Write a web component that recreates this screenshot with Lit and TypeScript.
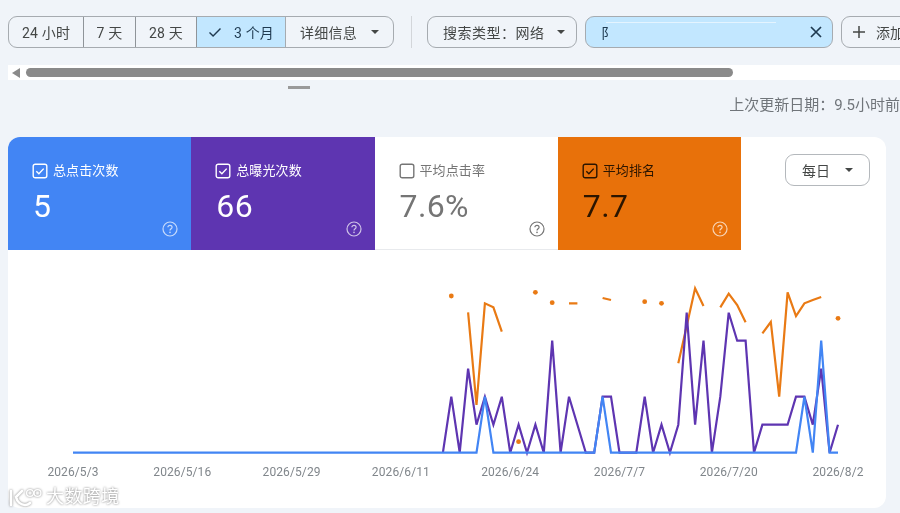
import { LitElement, css, html, svg } from 'lit'
import { customElement } from 'lit/decorators.js'

const xAt = (i: number) => 73 + 8.407 * i
const clickY = (v: number) => 452.7 - 28 * v

// per-day values, the first 44 days are all zero
const zeros = (n: number) => Array<number>(n).fill(0)
const impressions = [
  ...zeros(44),
  0, 2, 0, 3, 1, 2, 1, 2, 0, 1, 0, 1, 0, 4, 0, 2, 1, 0, 0, 2, 2, 0, 0, 0, 2, 0,
  1, 0, 1, 5, 1, 4, 0, 2, 5, 4, 4, 0, 1, 1, 1, 1, 2, 2, 1, 3, 0, 1,
]
const clicks = impressions.map(() => 0)
clicks[49] = 2
clicks[63] = 2
clicks[87] = 2
clicks[89] = 4

// average position, already as y in chart space
const position: Record<number, number> = {
  45: 296, 47: 312.3, 48: 405, 49: 303.3, 50: 307.3, 51: 331.7, 53: 441.7, 55: 292.3, 57: 302.7,
  59: 303.3, 60: 303.3, 63: 298, 64: 300, 68: 301.7, 70: 303.3, 72: 363.3, 73: 326, 74: 288.3, 75: 306,
  77: 307.3, 78: 293.7, 79: 305, 80: 322.3, 82: 333.3, 83: 322, 84: 396.7, 85: 292.3, 86: 316,
  87: 303.3, 88: 300, 89: 297, 91: 318.3,
}

const dateLabels = ['2026/5/3', '2026/5/16', '2026/5/29', '2026/6/11', '2026/6/24', '2026/7/7', '2026/7/20', '2026/8/2']

const positionRuns = () => {
  const runs: number[][] = []
  let run: number[] = []
  for (let i = 0; i < 92; i++) {
    if (position[i] !== undefined) {
      run.push(i)
    } else if (run.length) {
      runs.push(run)
      run = []
    }
  }
  if (run.length) runs.push(run)
  return runs
}

const checkIcon = (checked: boolean) => html`
  <svg class="check" viewBox="0 0 16 16" width="16" height="16">
    <rect x="1.2" y="1.2" width="13.6" height="13.6" rx="2" fill="none" stroke="currentColor" stroke-width="1.4"></rect>
    ${checked ? svg`<path d="M4.3 8.2l2.6 2.6 4.8-5.2" fill="none" stroke="currentColor" stroke-width="1.4"></path>` : ''}
  </svg>
`

const helpIcon = html`
  <svg class="help" viewBox="0 0 16 16" width="16" height="16">
    <circle cx="8" cy="8" r="7" fill="none" stroke="currentColor" stroke-width="1.2"></circle>
    <path d="M5.9 6.3c0-1.2.9-2 2.1-2s2.1.8 2.1 1.9c0 1.5-2.1 1.6-2.1 3.3" fill="none" stroke="currentColor" stroke-width="1.2"></path>
    <circle cx="8" cy="11.4" r=".8" fill="currentColor"></circle>
  </svg>
`

const caret = html`<span class="caret"></span>`

@customElement('app-root')
export class AppRoot extends LitElement {
  static styles = css`
    :host {
      display: block;
      width: 900px;
      height: 513px;
      overflow: hidden;
      position: relative;
      background: #f0f4f9;
      color: #444746;
      font-family: Roboto, 'Noto Sans CJK SC', sans-serif;
      font-size: 14px;
      filter: blur(0.35px);
    }
    .toolbar {
      display: flex;
      align-items: center;
      width: max-content;
      height: 32px;
      padding: 16px 0 0 8px;
    }
    .group {
      display: flex;
      height: 32px;
      border: 1px solid #a6abb0;
      border-radius: 9px;
      overflow: hidden;
      box-sizing: border-box;
      width: 386px;
    }
    .seg {
      display: flex;
      flex: none;
      align-items: center;
      justify-content: center;
      gap: 12px;
      box-sizing: border-box;
      border-left: 1px solid #8f9499;
      letter-spacing: 0.2px;
    }
    .seg:first-child {
      border-left: none;
    }
    .seg.on {
      background: #c2e7ff;
      color: #1f3a50;
    }
    .seg.more {
      border-left: 1px solid #a6abb0;
      gap: 14px;
    }
    .divider {
      width: 1px;
      height: 32px;
      background: #d3d6da;
      margin: 0 15px 0 17px;
    }
    .chip {
      display: flex;
      align-items: center;
      box-sizing: border-box;
      height: 32px;
      border: 1px solid #a6abb0;
      border-radius: 9px;
      flex: none;
    }
    .chip.type {
      width: 150px;
      padding-left: 15px;
      gap: 12px;
      letter-spacing: 0.5px;
    }
    .chip.filter {
      position: relative;
      width: 248px;
      margin-left: 8px;
      padding: 0 9px 0 15px;
      justify-content: space-between;
      background: #c2e7ff;
      color: #1f3a50;
    }
    .chip.filter .glare {
      position: absolute;
      left: 20px;
      top: 5px;
      width: 170px;
      height: 1px;
      background: #e4f4ff;
    }
    .chip.add {
      width: 150px;
      margin-left: 8px;
      padding-left: 10px;
      gap: 10px;
    }
    .caret {
      width: 0;
      height: 0;
      border: 4px solid transparent;
      border-top: 4px solid #444746;
      border-bottom: none;
    }
    .track {
      display: flex;
      align-items: center;
      gap: 6px;
      height: 15px;
      margin: 17px 0 0 8px;
      padding-left: 4px;
      background: #fff;
    }
    .arrow {
      width: 0;
      height: 0;
      border: 5px solid transparent;
      border-right: 8px solid #8a8a8a;
      border-left: none;
    }
    .thumb {
      width: 707px;
      height: 9px;
      border-radius: 5px;
      background: #8a8a8a;
    }
    .handle {
      width: 22px;
      height: 3px;
      margin: 6px 0 0 288px;
      background: #9a9a9a;
    }
    .updated {
      text-align: right;
      margin-top: 6px;
      height: 20px;
      line-height: 20px;
      font-size: 15px;
      color: #70757a;
      white-space: nowrap;
    }
    .card {
      width: 878px;
      height: 371px;
      margin: 22px 0 0 8px;
      background: #fff;
      border-radius: 12px;
      overflow: hidden;
    }
    .head {
      display: flex;
      justify-content: space-between;
      height: 113px;
    }
    .tiles {
      display: grid;
      grid-template-columns: repeat(4, 183.25px);
    }
    .tile {
      position: relative;
      box-sizing: border-box;
      padding: 25px 0 0 24px;
      border-bottom: 1px solid #e8eaed;
    }
    .tile.blue {
      background: #4285f4;
      color: #fff;
      border-color: #4285f4;
    }
    .tile.purple {
      background: #5e35b1;
      color: #fff;
      border-color: #5e35b1;
    }
    .tile.plain {
      color: #757575;
    }
    .tile.orange {
      background: #e8710a;
      color: #2b1500;
      border-color: #e8710a;
    }
    .label {
      display: flex;
      align-items: center;
      gap: 5px;
      font-size: 13px;
      line-height: 18px;
      letter-spacing: 0.1px;
    }
    .value {
      margin: 5px 0 0 1px;
      font-size: 32px;
      line-height: 42px;
      letter-spacing: 0.4px;
    }
    .help {
      position: absolute;
      right: 13px;
      bottom: 12px;
      opacity: 0.7;
    }
    .tile.plain .help {
      opacity: 1;
    }
    .tile.orange .help {
      color: #fff;
    }
    .daily {
      display: flex;
      align-items: center;
      gap: 15px;
      box-sizing: border-box;
      width: 85px;
      height: 32px;
      margin: 17px 16px 0 0;
      padding-left: 16px;
      border: 1px solid #b4b8bc;
      border-radius: 9px;
    }
    .chart {
      display: block;
    }
    .chart text {
      font-size: 12px;
      fill: #80868b;
      text-anchor: middle;
      letter-spacing: 0.1px;
    }
    .mark {
      position: absolute;
      left: 8px;
      bottom: 5px;
      display: flex;
      align-items: center;
      gap: 4px;
      color: #fff;
      font-size: 18px;
      line-height: 20px;
      letter-spacing: 0.4px;
      filter: drop-shadow(0 0 1px #7d7d7d);
    }
  `

  render() {
    const line = (values: number[], from: number, color: string) =>
      svg`<polyline fill="none" stroke=${color} stroke-width="2.2" stroke-linejoin="miter"
        points=${values.slice(from).map((v, i) => `${xAt(from + i).toFixed(1)},${clickY(v).toFixed(1)}`).join(' ')}></polyline>`

    return html`
      <div class="toolbar">
        <div class="group">
          <div class="seg" style="width:74px">24 小时</div>
          <div class="seg" style="width:52px">7 天</div>
          <div class="seg" style="width:61px">28 天</div>
          <div class="seg on" style="width:89px">
            <svg viewBox="0 0 14 14" width="14" height="14">
              <path d="M1.5 7.5l3.6 3.6 7.4-7.6" fill="none" stroke="currentColor" stroke-width="1.4"></path>
            </svg>
            3 个月
          </div>
          <div class="seg more" style="width:108px">详细信息 ${caret}</div>
        </div>
        <div class="divider"></div>
        <div class="chip type">搜索类型：网络 ${caret}</div>
        <div class="chip filter">
          <span class="glare"></span>
          <span>阝</span>
          <svg viewBox="0 0 14 14" width="14" height="14">
            <path d="M2 2l10 10M12 2L2 12" fill="none" stroke="currentColor" stroke-width="1.7"></path>
          </svg>
        </div>
        <div class="chip add">
          <svg viewBox="0 0 14 14" width="14" height="14">
            <path d="M7 1v12M1 7h12" fill="none" stroke="currentColor" stroke-width="1.5"></path>
          </svg>
          添加过滤条件
        </div>
      </div>

      <div class="track"><span class="arrow"></span><span class="thumb"></span></div>
      <div class="handle"></div>
      <div class="updated">上次更新日期：9.5小时前</div>

      <div class="card">
        <div class="head">
          <div class="tiles">
            <div class="tile blue">
              <div class="label">${checkIcon(true)}总点击次数</div>
              <div class="value">5</div>
              ${helpIcon}
            </div>
            <div class="tile purple">
              <div class="label">${checkIcon(true)}总曝光次数</div>
              <div class="value">66</div>
              ${helpIcon}
            </div>
            <div class="tile plain">
              <div class="label">${checkIcon(false)}平均点击率</div>
              <div class="value">7.6%</div>
              ${helpIcon}
            </div>
            <div class="tile orange">
              <div class="label">${checkIcon(true)}平均排名</div>
              <div class="value">7.7</div>
              ${helpIcon}
            </div>
          </div>
          <div class="daily">每日 ${caret}</div>
        </div>

        <svg class="chart" width="878" height="258" viewBox="8 250 878 258">
          ${positionRuns().map((run) =>
            run.length === 1
              ? svg`<circle cx=${xAt(run[0])} cy=${position[run[0]]} r="2.4" fill="#e97a14"></circle>`
              : svg`<polyline fill="none" stroke="#e97a14" stroke-width="2.2"
                  points=${run.map((i) => `${xAt(i).toFixed(1)},${position[i]}`).join(' ')}></polyline>`,
          )}
          ${line(impressions, 44, '#5e35b1')}
          ${line(clicks, 0, '#4285f4')}
          ${dateLabels.map((d, i) => svg`<text x=${xAt(i * 13)} y="476">${d}</text>`)}
        </svg>
      </div>

      <div class="mark">
        <svg viewBox="0 0 34 22" width="34" height="22" fill="none" stroke="#fff" stroke-width="2.6">
          <path d="M3 5v14" stroke-linecap="round"></path>
          <path d="M14 5l-6 6c1 5 5 8 9 8 2 0 4-1 5-2" stroke-linecap="round"></path>
          <circle cx="22" cy="7" r="3.4" stroke-width="1.4"></circle>
          <circle cx="29.5" cy="7" r="3.4" stroke-width="1.4"></circle>
        </svg>
        <span>大数跨境</span>
      </div>
    `
  }
}
